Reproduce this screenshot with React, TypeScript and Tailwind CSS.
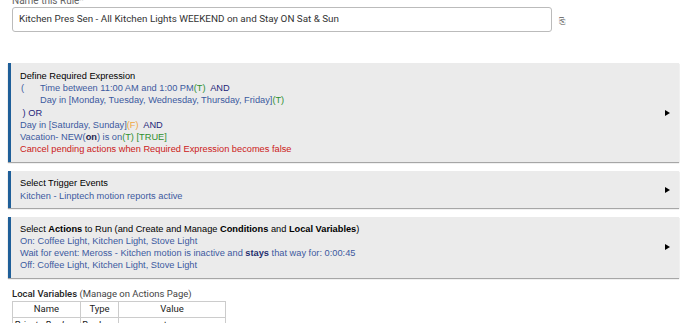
import { ReactNode } from "react";

const blue = "text-[#3c5a9f]";
const T = () => <span className="text-[#2f8f2f]">(T)</span>;
const F = () => <span className="text-[#f0a53c]">(F)</span>;
const Op = ({ children }: { children: ReactNode }) => (
  <span className="text-[#1f1f7a]">{children}</span>
);

function Card({ children, tall }: { children: ReactNode; tall?: boolean }) {
  return (
    <div
      className={`flex items-center bg-[#ebebeb] border-l-[3px] border-[#1f5f99] shadow-[0_1px_1px_rgba(0,0,0,0.35)] pl-[9px] pr-[9px] ${
        tall ? "py-[7px]" : "py-[6px]"
      }`}
    >
      <div className="flex-1 text-[9.25px] leading-[12.2px]">{children}</div>
      <div className="w-0 h-0 border-y-[3px] border-y-transparent border-l-[5px] border-l-black" />
    </div>
  );
}

export default function App() {
  return (
    <div className="w-[690px] h-[323px] overflow-hidden bg-white font-['Liberation_Sans',Arial,sans-serif]">
      <div className="pl-[12px] pt-0 font-['Roboto',sans-serif]">
        <div className="text-[10px] leading-[6px] h-[6px] overflow-hidden text-[#666] -mt-[2px] mb-[3px]">Name this Rule*</div>
        <div className="flex items-center">
          <div className="w-[540px] h-[25px] border border-[#bbb] rounded-[3px] flex items-center px-[6px] text-[9.85px] text-[#333]">
            Kitchen Pres Sen - All Kitchen Lights WEEKEND on and Stay ON Sat &amp; Sun
          </div>
          <span className="ml-[7px] mt-[4px] text-[8px] text-[#777]">⎘</span>
        </div>
      </div>

      <div className="pl-[8px] pr-[11px] mt-[31px] flex flex-col gap-[9px]">
        <Card tall>
          <div className="text-black">Define Required Expression</div>
          <div className={`${blue} flex`}>
            <span className="w-[20px] pl-[1px]">(</span>
            <span>
              Time between 11:00 AM and 1:00 PM<T />&nbsp; <Op>AND</Op>
            </span>
          </div>
          <div className={`${blue} pl-[20px]`}>
            Day in [Monday, Tuesday, Wednesday, Thursday, Friday]<T />
          </div>
          <div>
            <Op>&nbsp;) OR</Op>
          </div>
          <div className={blue}>
            Day in [Saturday, Sunday]<F />&nbsp; <Op>AND</Op>
          </div>
          <div className={blue}>
            Vacation- NEW(<b className="text-[#1f1f50]">on</b>) is on<T /> <span className="text-[#2f8f2f]">[TRUE]</span>
          </div>
          <div className="text-[#cc2020]">Cancel pending actions when Required Expression becomes false</div>
        </Card>

        <Card>
          <div className="text-black">Select Trigger Events</div>
          <div className={blue}>Kitchen - Linptech motion reports active</div>
        </Card>

        <Card>
          <div className="text-black">
            Select <b>Actions</b> to Run (and Create and Manage <b>Conditions</b> and <b>Local Variables</b>)
          </div>
          <div className={blue}>On: Coffee Light, Kitchen Light, Stove Light</div>
          <div className={blue}>
            Wait for event: Meross - Kitchen motion is inactive and <b className="text-[#1f2f6f]">stays</b> that way for: 0:00:45
          </div>
          <div className={blue}>Off: Coffee Light, Kitchen Light, Stove Light</div>
        </Card>
      </div>

      <div className="pl-[12px] mt-[10px] font-['Roboto',sans-serif] text-[9.5px] text-[#222]">
        <div className="leading-[12px]">
          <b className="font-medium">Local Variables</b> <span className="text-[#444]">(Manage on Actions Page)</span>
        </div>
        <table className="table-fixed w-[214px] border border-[#555] border-collapse mt-[1px] whitespace-nowrap">
          <thead>
            <tr className="h-[16px]">
              <th className="w-[68px] font-normal border border-[#ccc]">Name</th>
              <th className="w-[38px] font-normal border border-[#ccc]">Type</th>
              <th className="font-normal border border-[#ccc]">Value</th>
            </tr>
          </thead>
          <tbody>
            <tr className="h-[16px]">
              <td className="italic text-center border border-[#ccc] overflow-hidden">Private Boolean</td>
              <td className="text-center border border-[#ccc] overflow-hidden">Boolean</td>
              <td className="text-center border border-[#ccc]">true</td>
            </tr>
          </tbody>
        </table>
      </div>
    </div>
  );
}
